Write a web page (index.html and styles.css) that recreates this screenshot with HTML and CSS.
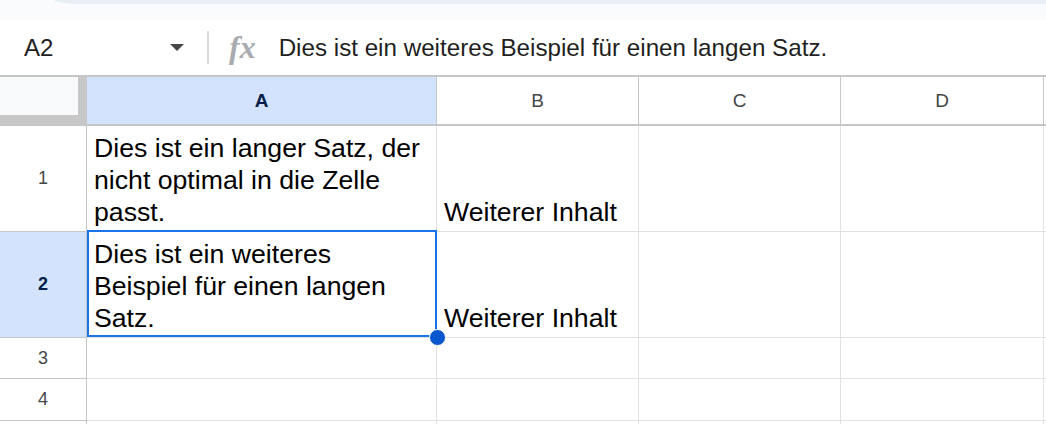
FILE: index.html
```html
<!DOCTYPE html>
<html lang="de">
<head>
  <meta charset="UTF-8">
  <meta name="viewport" content="width=device-width, initial-scale=1.0">
  <title>Tabelle</title>
  <link rel="stylesheet" href="styles.css">
</head>
<body>
  <div class="toolbar-edge">
    <div class="toolbar-pill"></div>
  </div>

  <div class="formula-bar">
    <div class="name-box">
      <span class="cell-ref">A2</span>
      <span class="caret"></span>
    </div>
    <div class="divider"></div>
    <span class="fx">fx</span>
    <div class="formula-text">Dies ist ein weiteres Beispiel für einen langen Satz.</div>
  </div>

  <div class="sheet">
    <div class="corner"><div class="corner-inner"></div></div>
    <div class="col-head active">A</div>
    <div class="col-head">B</div>
    <div class="col-head">C</div>
    <div class="col-head">D</div>
    <div class="col-head last"></div>

    <div class="row-head">1</div>
    <div class="cell">Dies ist ein langer Satz, der nicht optimal in die Zelle passt.</div>
    <div class="cell">Weiterer Inhalt</div>
    <div class="cell"></div>
    <div class="cell"></div>
    <div class="cell last"></div>

    <div class="row-head active">2</div>
    <div class="cell">Dies ist ein weiteres Beispiel für einen langen Satz.</div>
    <div class="cell">Weiterer Inhalt</div>
    <div class="cell"></div>
    <div class="cell"></div>
    <div class="cell last"></div>

    <div class="row-head">3</div>
    <div class="cell"></div>
    <div class="cell"></div>
    <div class="cell"></div>
    <div class="cell"></div>
    <div class="cell last"></div>

    <div class="row-head">4</div>
    <div class="cell"></div>
    <div class="cell"></div>
    <div class="cell"></div>
    <div class="cell"></div>
    <div class="cell last"></div>

    <div class="row-head"></div>
    <div class="cell"></div>
    <div class="cell"></div>
    <div class="cell"></div>
    <div class="cell"></div>
    <div class="cell last"></div>

    <div class="selection"></div>
    <div class="fill-handle"></div>
  </div>
</body>
</html>
```

FILE: styles.css
```css
* {
  margin: 0;
  padding: 0;
  box-sizing: border-box;
  font-family: 'Liberation Sans', Arial, sans-serif;
}

body {
  width: 1046px;
  height: 424px;
  overflow: hidden;
  background: #fff;
  color: #000;
}

/* top edge of the toolbar */
.toolbar-edge {
  height: 20px;
  background-color: #f9fbfd;
  padding-left: 54px;
}

.toolbar-pill {
  height: 4px;
  background-color: #e9eef6;
  border-bottom-left-radius: 30px 4px;
}

/* formula bar */
.formula-bar {
  display: flex;
  align-items: center;
  height: 55px;
  background: #fff;
}

.name-box {
  display: flex;
  align-items: center;
  justify-content: space-between;
  width: 186px;
  padding-left: 24px;
  padding-right: 2px;
}

.cell-ref {
  font-size: 24px;
  color: #1f1f1f;
}

.caret {
  width: 0;
  height: 0;
  border-left: 7px solid transparent;
  border-right: 7px solid transparent;
  border-top: 7px solid #444746;
}

.divider {
  width: 2px;
  height: 33px;
  margin-left: 21px;
  background-color: #dadce0;
}

.fx {
  margin-left: 20px;
  font-family: 'Liberation Serif', serif;
  font-style: italic;
  font-weight: bold;
  font-size: 32px;
  color: #a8abaf;
}

.formula-text {
  margin-left: 23px;
  font-size: 24.2px;
  color: #1f1f1f;
  white-space: nowrap;
}

/* grid */
.sheet {
  position: relative;
  display: grid;
  grid-template-columns: 87px 350px 202px 202px 203px 1fr;
  grid-template-rows: 49px 106px 106px 41px 42px 1fr;
  height: 349px;
  border-top: 2px solid #c4c7c5;
}

.corner {
  background-color: #c7c7c7;
}

.corner-inner {
  width: 78px;
  height: 38px;
  background-color: #f8f9fa;
}

.col-head {
  display: flex;
  align-items: center;
  justify-content: center;
  font-size: 19px;
  color: #444746;
  border-right: 1px solid #c4c7c5;
  border-bottom: 2px solid #c4c7c5;
}

.col-head.last {
  border-right: none;
}

.row-head {
  display: flex;
  align-items: center;
  justify-content: center;
  font-size: 18px;
  color: #444746;
  border-right: 1px solid #c4c7c5;
  border-bottom: 1px solid #c4c7c5;
}

.col-head.active,
.row-head.active {
  background-color: #d3e3fd;
  color: #041e49;
  font-weight: bold;
}

.cell {
  display: flex;
  align-items: flex-end;
  padding: 0 7px 3px;
  font-size: 26.67px;
  line-height: 32px;
  border-right: 1px solid #e1e3e1;
  border-bottom: 1px solid #e1e3e1;
  white-space: nowrap;
}

.cell:nth-child(6n+2) {
  white-space: normal;
}

.cell.last {
  border-right: none;
}

/* active cell outline and fill handle */
.selection {
  position: absolute;
  left: 87px;
  top: 153px;
  width: 350px;
  height: 107px;
  border: 2px solid #1a73e8;
  pointer-events: none;
}

.fill-handle {
  position: absolute;
  left: 429px;
  top: 252px;
  width: 17px;
  height: 17px;
  border-radius: 50%;
  background-color: #0b57d0;
  border: 1px solid #fff;
}
```
